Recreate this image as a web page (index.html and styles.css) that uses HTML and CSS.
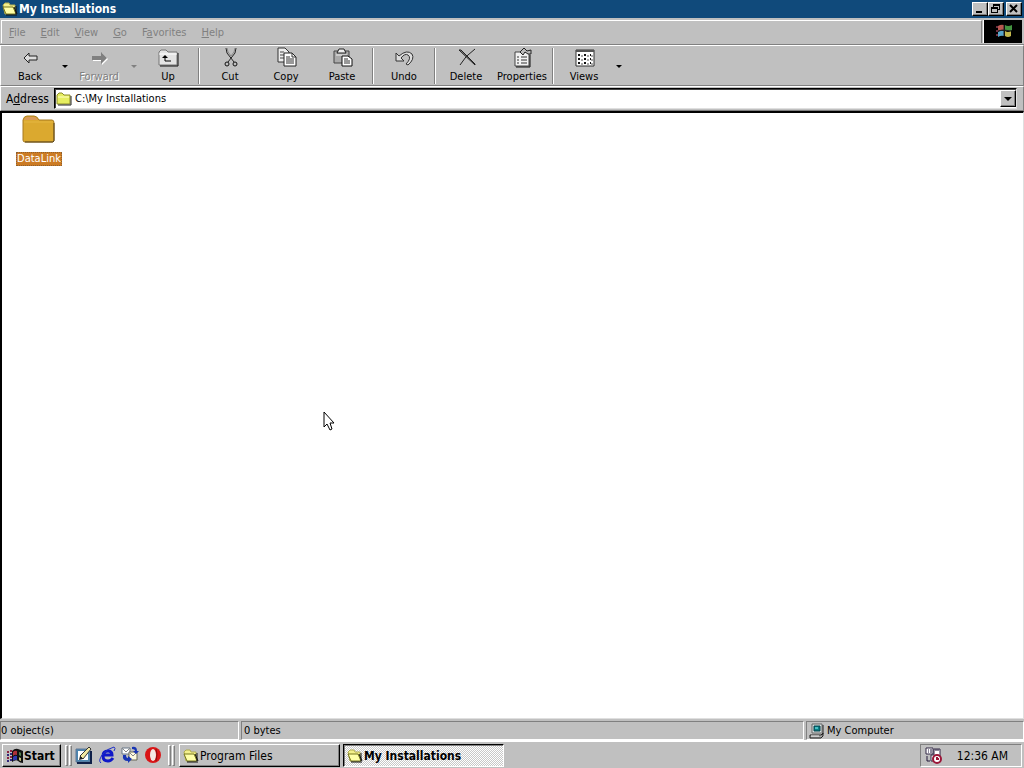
FILE: index.html
```html
<!DOCTYPE html>
<html lang="en">
<head>
<meta charset="utf-8">
<title>My Installations</title>
<link rel="stylesheet" href="styles.css">
</head>
<body class="desktop">
<svg class="defs" aria-hidden="true">
  <defs>
    <symbol id="folder-open" viewBox="0 0 16 16">
      <path d="M1 4L3 2H7L8 4H13V13H3Z" fill="#f4f08c" stroke="#b0ac50"/>
      <path d="M1 6H11L14 13H4Z" fill="#ffffa8" stroke="#77771c"/>
      <path d="M12 6L15 13M14 5V13" fill="none" stroke="#111"/>
      <path d="M4 14H15" stroke="#111"/>
    </symbol>
    <symbol id="folder" viewBox="0 0 16 16">
      <path d="M1 13V4L3 2H6L8 4H14V13Z" fill="#e6ee60" stroke="#8a8a28"/>
      <path d="M2 6H13" stroke="#ffffc0"/>
      <path d="M15 5V14H2" fill="none" stroke="#222"/>
    </symbol>
    <symbol id="flag" viewBox="0 0 18 16">
      <path d="M1 4h2M1 10h2M4 3h2M4 9h2" stroke="#8b2340" stroke-width="2"/>
      <path d="M1 7h2M1 13h2M4 6h2M4 12h2" stroke="#30267b" stroke-width="2"/>
      <path d="M6 3Q9 0 12 1T17 3V15Q14 15 12 13T6 14Z" fill="#111"/>
      <path d="M7 4Q9 2 11 3V7Q9 6 7 8Z" fill="#b03038"/>
      <path d="M13 4Q14 4 15 5V8Q14 8 13 7Z" fill="#508050"/>
      <path d="M7 9Q9 7 11 8V12Q9 11 7 13Z" fill="#3038b0"/>
      <path d="M13 9Q14 10 15 10V13Q14 13 13 12Z" fill="#c8c080"/>
    </symbol>
  </defs>
</svg>

<main class="window">
  <header class="titlebar">
    <svg class="icon16"><use href="#folder-open"/></svg>
    <h1 class="title">My Installations</h1>
    <div class="window-buttons">
      <button class="winbtn" aria-label="Minimize"><svg viewBox="0 0 12 10"><path d="M2 8H8" stroke="#000" stroke-width="2"/></svg></button>
      <button class="winbtn" aria-label="Restore"><svg viewBox="0 0 12 10" shape-rendering="crispEdges"><path d="M3 0H10V6H8V9H1V3H3ZM4 2V3H8V5H9V2ZM2 5V8H7V5Z" fill="#000" fill-rule="evenodd"/></svg></button>
      <button class="winbtn winbtn-close" aria-label="Close"><svg viewBox="0 0 12 10"><path d="M2 1L9 8M9 1L2 8" stroke="#000" stroke-width="2"/></svg></button>
    </div>
  </header>

  <div class="menu-row">
    <nav class="menubar">
      <button class="menu" disabled><u>F</u>ile</button>
      <button class="menu" disabled><u>E</u>dit</button>
      <button class="menu" disabled><u>V</u>iew</button>
      <button class="menu" disabled><u>G</u>o</button>
      <button class="menu" disabled>F<u>a</u>vorites</button>
      <button class="menu" disabled><u>H</u>elp</button>
    </nav>
    <div class="brand">
      <svg viewBox="0 0 38 22">
        <path d="M12 7h2M12 11h2M12 15h2" stroke="#703040" stroke-width="2"/>
        <path d="M14 6Q17 4 20 5V10Q17 9 14 11Z" fill="#b85850"/>
        <path d="M21 5Q24 7 28 5V10Q25 12 21 10Z" fill="#449340"/>
        <path d="M14 12Q17 10 20 11V16Q17 15 14 17Z" fill="#58a5cb"/>
        <path d="M21 11Q24 13 27 11V16Q24 18 21 16Z" fill="#c4b74c"/>
        <path d="M20 5V16M14 11L20 10L27 11" fill="none" stroke="#222"/>
      </svg>
    </div>
  </div>

  <div class="toolbar" role="toolbar">
    <button class="tool"><svg class="tool-icon" viewBox="0 0 22 22"><path d="M5 11L10 6V9H18V13H10V16Z" fill="#ddd" stroke="#222"/></svg>Back</button>
    <button class="drop" aria-label="Back history"></button>
    <button class="tool" disabled><svg class="tool-icon" viewBox="0 0 22 22"><path d="M20 12L14 6V10H5V14H14V18Z" fill="#fff"/><path d="M19 11L13 5V9H4V13H13V17Z" fill="#808080"/></svg>Forward</button>
    <button class="drop" aria-label="Forward history" disabled></button>
    <button class="tool"><svg class="tool-icon" viewBox="0 0 22 22"><path d="M2 18V5L4 3H9L11 5H20V18Z" fill="#e4e4e4" stroke="#777"/><path d="M2 7H20" stroke="#fff"/><path d="M21 6V19H3" fill="none" stroke="#111" stroke-width="1"/><path d="M8 10V14H14" fill="none" stroke="#000"/><path d="M5 11L8 8L11 11Z"/></svg>Up</button>
    <i class="sep"></i>
    <button class="tool"><svg class="tool-icon" viewBox="0 0 22 22"><path d="M7 1L8 6L15 15M17 1L16 6L9 15" fill="none" stroke="#222"/><path d="M8 1L9 5L12 9M16 1L15 5L12 9" fill="none" stroke="#888"/><circle cx="8" cy="17" r="2" fill="none" stroke="#111"/><circle cx="16" cy="17" r="2" fill="none" stroke="#111"/></svg>Cut</button>
    <button class="tool"><svg class="tool-icon" viewBox="0 0 22 22"><path d="M3 1H10L14 5V15H3Z" fill="#eee" stroke="#333"/><path d="M5 5H9M5 8H9M5 11H9" stroke="#444"/><path d="M9 6H17L21 10V19H9Z" fill="#fff" stroke="#222"/><path d="M17 6V10H21M11 10H15M11 12H19M11 14H19M11 16H19" fill="none" stroke="#333"/></svg>Copy</button>
    <button class="tool"><svg class="tool-icon" viewBox="0 0 22 22"><path d="M3 4H18V16H3Z" fill="#aaa" stroke="#444"/><path d="M6 6L8 2H13L15 6Z" fill="#eee" stroke="#222"/><path d="M5 8H16" stroke="#eee"/><path d="M11 9H17L21 12V19H11Z" fill="#fff" stroke="#111"/><path d="M13 12H17M13 14H19M13 16H19" stroke="#333"/></svg>Paste</button>
    <i class="sep"></i>
    <button class="tool"><svg class="tool-icon" viewBox="0 0 22 22"><path d="M3 6V14H11L8 11Q12 6 15 8Q19 11 13 17L15 18Q22 12 19 7Q14 2 6 9Z" fill="#ddd" stroke="#333"/></svg>Undo</button>
    <i class="sep"></i>
    <button class="tool"><svg class="tool-icon" viewBox="0 0 22 22"><path d="M4 3H6L20 17V18Z" fill="#888" stroke="#222"/><path d="M20 2Q10 9 5 18" fill="none" stroke="#222"/></svg>Delete</button>
    <button class="tool"><svg class="tool-icon" viewBox="0 0 22 22"><path d="M4 5H18V19H4Z" fill="#f2f2f2" stroke="#444"/><path d="M6 10H8M10 10H16M6 13H8M10 13H16M6 16H8M10 16H16" stroke="#333"/><path d="M9 5L13 1L16 4L20 3V7H17L14 5L12 8Z" fill="#bbb" stroke="#222"/><path d="M19 8V20H5" fill="none" stroke="#111"/></svg>Properties</button>
    <i class="sep"></i>
    <button class="tool"><svg class="tool-icon" viewBox="0 0 22 22"><path d="M3 3H21V19H3Z" fill="#fff" stroke="#333"/><path d="M3 4H21" stroke="#555" stroke-width="2"/><path d="M5 8h2M11 8h2M17 8h1M5 12h2M11 12h2M17 12h1M5 16h2M11 16h2M17 16h1" stroke="#111" stroke-width="2"/><path d="M8 9h2M14 9h2M18 9h2M8 13h2M14 13h2M18 13h2M8 17h2M14 17h2M18 17h2" stroke="#555"/></svg>Views</button>
    <button class="drop" aria-label="View modes"></button>
  </div>

  <div class="address-row">
    <label class="address-label" for="address">A<u>d</u>dress</label>
    <div class="combo">
      <svg class="icon16"><use href="#folder"/></svg>
      <input class="address" id="address" type="text" value="C:\My Installations">
      <button class="combo-button" aria-label="Show addresses"></button>
    </div>
  </div>

  <section class="files">
    <button class="file">
      <svg class="file-icon" viewBox="0 0 34 30"><path d="M1 25V5Q2 1 5 1H12Q15 1 17 5H30Q32 5 32 8V25Q32 27 30 27H3Q1 27 1 25Z" fill="#dba92f" stroke="#a77a20"/><path d="M2 5Q3 2 6 2H12Q14 2 16 5" fill="#d99b5b"/><path d="M2 7H31" stroke="#e5b742"/><path d="M32 8V26L31 27H3" fill="none" stroke="#57431c"/></svg>
      <span class="file-name">DataLink</span>
    </button>
  </section>

  <footer class="status">
    <span class="pane pane-objects">0 object(s)</span>
    <span class="pane pane-bytes">0 bytes</span>
    <span class="pane pane-zone"><svg class="icon16" viewBox="0 0 16 16"><path d="M3 1H13V10H3Z" fill="#d8e0e0" stroke="#666"/><path d="M5 3H11V8H5Z" fill="#087f86" stroke="#033f48"/><path d="M6 5H9" stroke="#8ff"/><path d="M14 2V11L12 12M1 12H12L14 10V13L12 15H1Z" fill="#aaa" stroke="#222"/><path d="M2 13H10" stroke="#eee"/></svg>My Computer</span>
  </footer>
</main>

<footer class="taskbar">
  <button class="start"><svg class="start-icon"><use href="#flag"/></svg>Start</button>
  <i class="grip"></i><i class="grip"></i>
  <nav class="quick">
    <button class="launch" aria-label="Show Desktop"><svg viewBox="0 0 18 18"><path d="M1 3H15V16H1Z" fill="#4b86b0" stroke="#607898"/><path d="M3 5H13V14H3Z" fill="#fff"/><path d="M5 10L8 13L16 3L14 1Z" fill="#f1e8a0" stroke="#333"/><path d="M4 14L5 10L8 13Z" fill="#222"/><path d="M16 5V17H2" fill="none" stroke="#102048" stroke-width="2"/></svg></button>
    <button class="launch" aria-label="Internet Explorer"><svg viewBox="0 0 18 18"><path d="M15 12Q13 15 10 15Q5 15 5 10Q5 5 10 5Q14 5 14 9H6" fill="none" stroke="#1018c8" stroke-width="3"/><path d="M3 17Q0 15 4 9Q10 2 16 1Q18 2 16 5" fill="none" stroke="#2030c8" stroke-width="1"/></svg></button>
    <button class="launch" aria-label="Outlook Express"><svg viewBox="0 0 18 18"><path d="M1 2H9V8H1Z" fill="#fff" stroke="#678"/><path d="M8 6H16V14H8Z" fill="#fffce0" stroke="#665"/><path d="M8 6L12 10L16 6M1 2L5 6L9 2" fill="none" stroke="#888"/><path d="M2 9Q1 15 7 15V17L11 13L7 10V12Q5 12 5 9ZM11 1Q16 0 16 5L18 5L15 8L12 5H14Q14 3 11 3Z" fill="#1936b4"/></svg></button>
    <button class="launch" aria-label="Opera"><svg viewBox="0 0 18 18"><ellipse cx="9" cy="9" rx="8" ry="8" fill="#d91517"/><ellipse cx="9" cy="9" rx="3" ry="6" fill="#f4e8e4"/><path d="M12 3Q14 8 12 15" fill="none" stroke="#86100f"/></svg></button>
  </nav>
  <i class="grip"></i><i class="grip"></i>
  <div class="tasks">
    <button class="task"><svg class="icon16"><use href="#folder-open"/></svg>Program Files</button>
    <button class="task task-active" aria-pressed="true"><svg class="icon16"><use href="#folder-open"/></svg>My Installations</button>
  </div>
  <div class="tray">
    <svg class="tray-icon" viewBox="0 0 18 18"><path d="M1 1H8V7H1ZM9 2H15V14H6V8H9Z" fill="#fff" stroke="#302644"/><path d="M3 3H4M5 3H7M3 5H4M5 5H7M2 9V14H5M10 3H14" fill="none" stroke="#201638"/><circle cx="12" cy="12" r="4" fill="#fff" stroke="#9b1638" stroke-width="2"/><path d="M12 10V12H14" fill="none" stroke="#9b1638" stroke-width="2"/></svg>
    <time class="clock">12:36 AM</time>
  </div>
</footer>
<svg class="cursor" viewBox="0 0 12 20" aria-hidden="true"><path d="M1 1V16L4 13L7 19L9 18L7 12H11Z" fill="#fff" stroke="#000"/></svg>
</body>
</html>
```

FILE: styles.css
```css
* { box-sizing: border-box; }

.desktop {
  margin: 0;
  height: 100vh;
  display: flex;
  flex-direction: column;
  overflow: hidden;
  background: #c0c0c0;
  color: #000;
  font: 11px/14px "DejaVu Sans Condensed", "DejaVu Sans", sans-serif;
}

.defs { position: absolute; width: 0; height: 0; }
button, input { font: inherit; color: inherit; margin: 0; padding: 0; border: 0; background: none; }
svg { display: block; flex: none; }
.icon16 { width: 16px; height: 16px; }

.window { flex: 1; min-height: 0; display: flex; flex-direction: column; }

.titlebar {
  height: 18px;
  display: flex;
  align-items: center;
  gap: 1px;
  padding: 0 2px;
  background: #104a7b;
  color: #fff;
}
.title { flex: 1; margin: 0; font-size: 12px; line-height: 18px; font-weight: bold; }
.window-buttons { display: flex; }
.winbtn {
  width: 16px;
  height: 14px;
  padding: 1px;
  background: #c0c0c0;
  border: 1px solid;
  border-color: #fff #000 #000 #fff;
  box-shadow: inset -1px -1px #808080;
}
.winbtn svg { width: 12px; height: 10px; }
.winbtn-close { margin-left: 2px; }

.menu-row {
  height: 27px;
  display: flex;
  padding: 2px 2px 1px 1px;
  border-bottom: 1px solid #808080;
}
.menubar {
  flex: 1;
  display: flex;
  align-items: center;
  gap: 15px;
  padding: 1px 0 0 7px;
  border-top: 1px solid #fff;
  border-left: 1px solid #fff;
  border-right: 1px solid #808080;
}
.menu { color: #808080; }
.brand { width: 39px; margin-left: 1px; background: #000; border-left: 1px solid #fff; }
.brand svg { width: 38px; height: 22px; }

.toolbar {
  height: 41px;
  display: flex;
  padding: 1px 1px 0;
  border: 1px solid;
  border-color: #fff #808080 #808080 #fff;
}
.tool {
  width: 56px;
  display: flex;
  flex-direction: column;
  align-items: center;
  gap: 1px;
  white-space: nowrap;
}
.tool-icon { width: 22px; height: 22px; }
.tool:disabled { color: #808080; text-shadow: 1px 1px #fff; }
.drop { width: 13px; display: flex; align-items: center; justify-content: center; }
.drop::before, .combo-button::before {
  content: "";
  border: 3px solid transparent;
  border-top-color: #000;
  border-bottom: 0;
}
.drop:disabled::before { border-top-color: #808080; }
.sep { width: 2px; margin: 1px 2px; background: linear-gradient(90deg, #808080 50%, #fff 50%); }

.address-row {
  height: 25px;
  display: flex;
  align-items: center;
  padding: 0 6px 0 5px;
  border: 1px solid;
  border-color: #fff #808080 #808080 #fff;
}
.address-label { width: 48px; font-size: 12px; }
.combo {
  flex: 1;
  height: 21px;
  display: flex;
  align-items: center;
  gap: 3px;
  padding-left: 1px;
  background: #fff;
  border: 1px solid;
  border-color: #000 #dfdfdf #dfdfdf #000;
  box-shadow: inset 1px 1px #404040;
}
.address { flex: 1; min-width: 0; padding-top: 1px; outline: 0; }
.combo-button {
  width: 16px;
  height: 17px;
  display: flex;
  align-items: center;
  justify-content: center;
  background: #c0c0c0;
  border: 1px solid;
  border-color: #fff #000 #000 #fff;
  box-shadow: inset -1px -1px #808080;
}
.combo-button::before { border-width: 4px 4px 0; }

.files {
  flex: 1;
  min-height: 0;
  padding: 2px 0 0;
  background: #fff;
  border: 1px solid #dfdfdf;
  border-top: 2px solid #000;
  border-left: 2px solid #000;
}
.file {
  width: 74px;
  display: flex;
  flex-direction: column;
  align-items: center;
  gap: 7px;
}
.file-icon { width: 34px; height: 30px; }
.file-name { background: #cc7b24; color: #fff; padding: 0 1px; outline: 1px dotted #8e602e; outline-offset: -1px; }

.status { height: 22px; display: flex; gap: 2px; padding-top: 2px; border-bottom: 1px solid #fff; }
.pane {
  display: flex;
  align-items: center;
  gap: 2px;
  padding: 1px 0 0 2px;
  border: 1px solid;
  border-color: #808080 #fff #fff #808080;
}
.pane-objects { width: 239px; padding-left: 0; }
.pane-bytes { flex: 1; }
.pane-zone { width: 218px; }

.taskbar {
  height: 27px;
  display: flex;
  align-items: center;
  padding: 1px 2px;
  border-top: 1px solid #fff;
}
.start, .task {
  height: 23px;
  display: flex;
  align-items: center;
  border: 1px solid;
  border-color: #fff #000 #000 #fff;
  box-shadow: inset -1px -1px #808080;
}
.start { width: 59px; padding: 1px 0 0 3px; font-size: 12px; font-weight: bold; margin-right: 4px; }
.start-icon { width: 18px; height: 16px; }
.grip {
  width: 3px;
  height: 21px;
  margin-right: 1px;
  border: 1px solid;
  border-color: #fff #808080 #808080 #fff;
}
.quick { display: flex; gap: 5px; padding: 0 6px 0 2px; }
.launch { width: 18px; height: 18px; }
.launch svg { width: 18px; height: 18px; }
.tasks { display: flex; gap: 3px; padding-left: 3px; }
.task { width: 161px; gap: 1px; padding: 1px 0 0 3px; font-size: 12px; }
.task-active {
  font-weight: bold;
  padding-top: 2px;
  border-color: #000 #fff #fff #000;
  box-shadow: inset 1px 1px #808080;
  background: repeating-conic-gradient(#fff 0 25%, #c8c8c8 0 50%) 0 0 / 2px 2px;
}
.tray {
  width: 102px;
  height: 23px;
  margin-left: auto;
  display: flex;
  align-items: center;
  justify-content: space-between;
  padding: 1px 13px 0 4px;
  border: 1px solid;
  border-color: #808080 #fff #fff #808080;
  font-size: 12px;
}
.tray-icon { width: 18px; height: 18px; }

.cursor { position: absolute; left: 323px; top: 411px; width: 12px; height: 20px; }
```
